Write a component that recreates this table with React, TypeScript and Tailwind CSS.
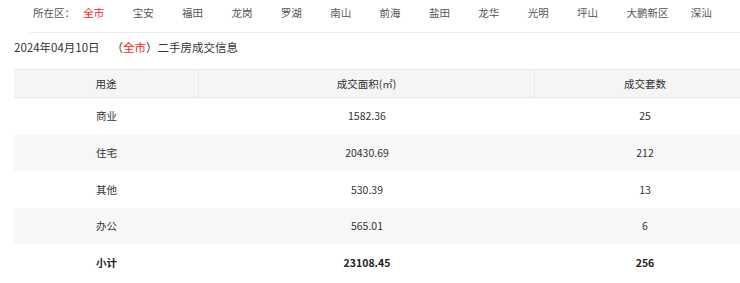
import React from "react";

const districts = ["宝安", "福田", "龙岗", "罗湖", "南山", "前海", "盐田", "龙华", "光明", "坪山"];

const rows = [
  { use: "商业", area: "1582.36", count: "25" },
  { use: "住宅", area: "20430.69", count: "212" },
  { use: "其他", area: "530.39", count: "13" },
  { use: "办公", area: "565.01", count: "6" },
];

export default function App() {
  return (
    <div
      className="w-[740px] h-[283px] overflow-hidden bg-white text-[#333]"
      style={{ fontFamily: '"Microsoft YaHei", "Noto Sans CJK SC", "Noto Sans", sans-serif' }}
    >
      <div className="ml-[30px] h-[33px] border-b border-[#ebebeb] pl-[3px] pt-[5px]">
        <div className="flex text-[10.5px] leading-[16px] text-[#555] whitespace-nowrap">
          <span className="w-[51px]">所在区：</span>
          <span className="w-[50px] text-[#ff2020]">全市</span>
          {districts.map((d) => (
            <span key={d} className="w-[50px]">
              {d}
            </span>
          ))}
          <span className="w-[65px]">大鹏新区</span>
          <span className="w-[50px]">深汕</span>
        </div>
      </div>
      <div className="pl-[14px] h-[36px] pt-[6px] flex items-start leading-[16px] text-[11.5px] text-[#333] whitespace-nowrap">
        <span>2024年04月10日</span>
        <span className="ml-[12px]">（</span>
        <span className="text-[#ff2020]">全市</span>
        <span>）二手房成交信息</span>
      </div>
      <div className="ml-[14px] w-[741px] text-[10.5px] text-[#333]">
        <div className="grid grid-cols-[185px_336px_220px] h-[29px] bg-[#f5f5f5] border-y border-[#e8e8e8]">
          <div className="flex items-center justify-center border-r border-[#e8e8e8]">用途</div>
          <div className="flex items-center justify-center border-r border-[#e8e8e8]">成交面积(㎡)</div>
          <div className="flex items-center justify-center">成交套数</div>
        </div>
        {rows.map((r, i) => (
          <div
            key={r.use}
            className={`grid grid-cols-[185px_336px_220px] h-[36.6px] ${i % 2 === 1 ? "bg-[#f7f7f7]" : "bg-white"}`}
          >
            <div className="flex items-center justify-center">{r.use}</div>
            <div className="flex items-center justify-center">{r.area}</div>
            <div className="flex items-center justify-center">{r.count}</div>
          </div>
        ))}
        <div className="grid grid-cols-[185px_336px_220px] h-[36.6px] font-bold text-[#222]">
          <div className="flex items-center justify-center">小计</div>
          <div className="flex items-center justify-center">23108.45</div>
          <div className="flex items-center justify-center">256</div>
        </div>
      </div>
    </div>
  );
}
